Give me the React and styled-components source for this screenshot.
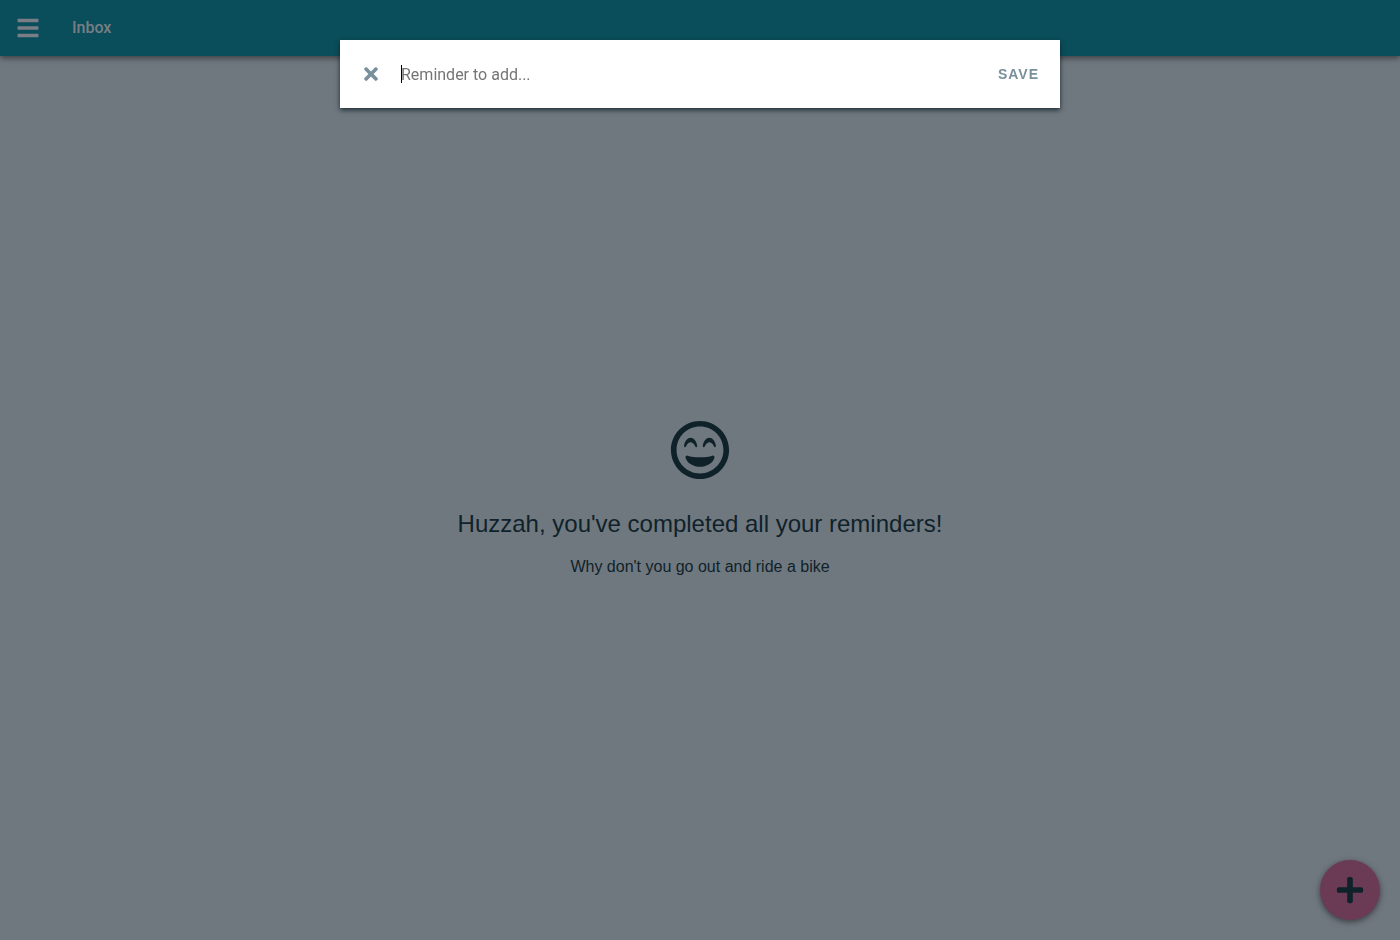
import React from "react";
import styled, { createGlobalStyle } from "styled-components";
import { FaBars, FaTimes, FaPlus, FaRegGrinBeam } from "react-icons/fa";

const GlobalStyle = createGlobalStyle`
  *, *::before, *::after { box-sizing: border-box; }
  body {
    margin: 0;
    background: #70787f;
    color: #0f222a;
    font-family: "Liberation Sans", Arial, sans-serif;
    font-size: 16px;
  }
  button { font-family: inherit; cursor: pointer; border: 0; }
`;

const Page = styled.div`
  display: flex;
  flex-direction: column;
  min-height: 100vh;
  background: #70787f;
`;

const TopBar = styled.header`
  display: flex;
  align-items: center;
  height: 56px;
  background: #0a4e5b;
  box-shadow: 0 2px 6px rgba(0, 0, 0, 0.5);
`;

const MenuButton = styled.button`
  display: grid;
  place-items: center;
  width: 56px;
  height: 56px;
  padding: 0;
  background: none;
  color: #787e84;
`;

const Title = styled.h1`
  margin: 0 16px;
  font-family: Roboto, sans-serif;
  font-size: 16px;
  line-height: 20px;
  font-weight: 500;
  color: #787e84;
`;

const EmptyState = styled.main`
  flex: 1;
  display: flex;
  flex-direction: column;
  align-items: center;
  justify-content: center;
  padding-top: 3px;
  text-align: center;
`;

const Headline = styled.h2`
  margin: 29px 0 16px;
  font-size: 24px;
  line-height: 30px;
  font-weight: 400;
`;

const Hint = styled.p`
  margin: 0;
  line-height: 24px;
`;

const AddButton = styled.button`
  position: fixed;
  right: 20px;
  bottom: 20px;
  display: grid;
  place-items: center;
  width: 60px;
  height: 60px;
  padding: 0;
  border-radius: 50%;
  background: #6b3b55;
  color: #0f222a;
  box-shadow: 0 2px 6px rgba(0, 0, 0, 0.5);
`;

const Dialog = styled.form`
  position: fixed;
  top: 40px;
  left: 0;
  right: 0;
  display: flex;
  align-items: center;
  width: 90%;
  max-width: 720px;
  height: 68px;
  margin: 0 auto;
  padding: 0 21px;
  background: #fff;
  box-shadow: 0 2px 5px rgba(15, 34, 42, 0.9);
`;

const CloseButton = styled.button`
  display: grid;
  place-items: center;
  width: 20px;
  height: 20px;
  padding: 0;
  background: none;
  color: #78909c;
`;

const Field = styled.div`
  position: relative;
  flex: 1;
  min-width: 0;
  margin: 0 20px;
`;

const Caret = styled.span`
  position: absolute;
  top: 3px;
  left: 0;
  width: 1px;
  height: 18px;
  background: #000;
`;

const ReminderInput = styled.input`
  display: block;
  width: 100%;
  height: 24px;
  padding: 0;
  border: 0;
  outline: 0;
  background: none;
  font-family: Roboto, sans-serif;
  font-size: 16px;
  caret-color: transparent;
  &::placeholder { color: #757575; opacity: 1; }
`;

const SaveButton = styled.button`
  padding: 0;
  background: none;
  color: #78909c;
  font-size: 14px;
  font-weight: 700;
  letter-spacing: 1px;
`;

export default function App() {
  return (
    <Page>
      <GlobalStyle />
      <TopBar>
        <MenuButton aria-label="Menu"><FaBars size={24} /></MenuButton>
        <Title>Inbox</Title>
      </TopBar>
      <EmptyState>
        <FaRegGrinBeam size={60} />
        <Headline>Huzzah, you've completed all your reminders!</Headline>
        <Hint>Why don't you go out and ride a bike</Hint>
      </EmptyState>
      <AddButton aria-label="Add reminder"><FaPlus size={30} /></AddButton>
      <Dialog role="dialog" aria-label="Add reminder" onSubmit={(e) => e.preventDefault()}>
        <CloseButton type="button" aria-label="Close"><FaTimes size={20} /></CloseButton>
        <Field>
          <ReminderInput aria-label="Reminder" placeholder="Reminder to add..." autoFocus />
          <Caret />
        </Field>
        <SaveButton type="submit">SAVE</SaveButton>
      </Dialog>
    </Page>
  );
}
